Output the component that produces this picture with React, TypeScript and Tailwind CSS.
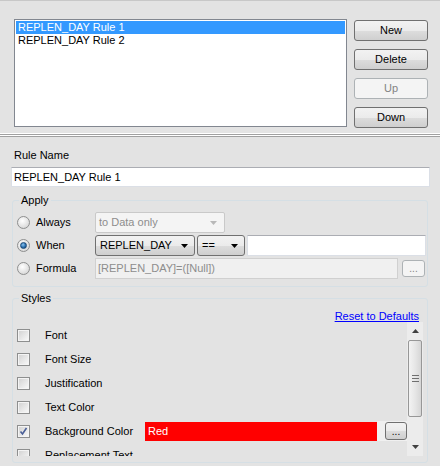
import type { ReactNode } from 'react';

const FONT = "font-['Liberation_Sans',Arial,sans-serif]";

function WinButton({ children, disabled, className }: { children: ReactNode; disabled?: boolean; className?: string }) {
  return (
    <div
      className={[
        'flex items-center justify-center rounded-[3px] border leading-[13px]',
        disabled
          ? 'border-[#adb2b5] bg-[#f4f4f4] text-[#838383]'
          : 'border-[#707070] bg-[linear-gradient(to_bottom,#f2f2f2_0%,#ebebeb_50%,#dddddd_51%,#cfcfcf_100%)] text-black',
        className ?? '',
      ].join(' ')}
    >
      {children}
    </div>
  );
}

function Arrow({ light }: { light?: boolean }) {
  return (
    <svg width="7" height="4" viewBox="0 0 7 4" className="shrink-0">
      <path d="M0 0h7L3.5 4z" fill={light ? '#b8b8b8' : '#000'} />
    </svg>
  );
}

function Radio({ checked }: { checked?: boolean }) {
  return (
    <div className="flex h-[13px] w-[13px] shrink-0 items-center justify-center rounded-full border border-[#8e8f8f] bg-[radial-gradient(circle_at_40%_35%,#ffffff,#dcdcdc_70%,#c8c8c8)]">
      {checked ? (
        <div className="h-[7px] w-[7px] rounded-full border border-[#1b4a78] bg-[radial-gradient(circle_at_40%_35%,#8cc4ee,#2a70b0_55%,#0f3d6b)]" />
      ) : null}
    </div>
  );
}

function Checkbox({ checked }: { checked?: boolean }) {
  return (
    <div className="flex h-[13px] w-[13px] shrink-0 items-center justify-center border border-[#8e8f8f] bg-[#f4f4f4]">
      <div className="flex h-[9px] w-[9px] items-center justify-center bg-[linear-gradient(135deg,#d4d4d4,#f7f7f7)]">
        {checked ? (
          <svg width="9" height="9" viewBox="0 0 9 9">
            <path d="M1.5 4.5l2 2.5L7.5 1" stroke="#4a5f97" strokeWidth="1.6" fill="none" />
          </svg>
        ) : null}
      </div>
    </div>
  );
}

function GroupBox({ title, children, className }: { title: string; children: ReactNode; className?: string }) {
  return (
    <div className={'relative mx-[12px] rounded-[3px] border border-[#d5dfe5] ' + (className ?? '')}>
      <span className="absolute -top-[7px] left-[6px] bg-[#e3e3e3] px-[2px] leading-[13px]">{title}</span>
      {children}
    </div>
  );
}

const styleRows = ['Font', 'Font Size', 'Justification', 'Text Color', 'Background Color', 'Replacement Text'];

export default function App() {
  return (
    <div className={`${FONT} h-[466px] w-[440px] overflow-hidden border-t border-[#c8c8c8] bg-[#e3e3e3] text-[11px] text-black`}>
      {/* rule list + buttons */}
      <div className="flex h-[132px] items-start pl-[14px] pt-[18px]">
        <div className="h-[108px] w-[333px] border border-[#828790] bg-white p-[1px] leading-[13px]">
          <div className="bg-[#3399ff] pl-[2px] text-white">REPLEN_DAY Rule 1</div>
          <div className="pl-[2px]">REPLEN_DAY Rule 2</div>
        </div>
        <div className="ml-[7px] mt-[1px] flex w-[74px] flex-col gap-[8px]">
          <WinButton className="h-[21px]">New</WinButton>
          <WinButton className="h-[21px]">Delete</WinButton>
          <WinButton className="h-[21px]" disabled>Up</WinButton>
          <WinButton className="h-[21px]">Down</WinButton>
        </div>
      </div>

      {/* splitter */}
      <div className="h-[4px] border-y border-t-white border-b-[#a0a0a0] bg-[linear-gradient(to_bottom,#a0a0a0_50%,#ffffff_50%)]" />

      <div className="pt-[12px]">
        <div className="pl-[14px] leading-[13px]">Rule Name</div>
        <div className="ml-[11px] mt-[5px] flex h-[20px] w-[419px] items-center border border-[#dbdfe6] border-t-[#abadb3] bg-white pl-[2px]">
          REPLEN_DAY Rule 1
        </div>

        <GroupBox title="Apply" className="mt-[13px] h-[87px] pt-[11px]">
          <div className="flex flex-col gap-[2px]">
            <div className="flex h-[21px] items-center">
              <div className="ml-[4px]"><Radio /></div>
              <span className="ml-[6px] w-[59px]">Always</span>
              <div className="flex h-[21px] w-[130px] items-center justify-between rounded-[2px] border border-[#c9c9c9] bg-[#f4f4f4] pl-[3px] pr-[7px] text-[#8d8d8d]">
                to Data only
                <Arrow light />
              </div>
            </div>
            <div className="flex h-[21px] items-center">
              <div className="ml-[4px]"><Radio checked /></div>
              <span className="ml-[6px] w-[59px]">When</span>
              <WinButton className="h-[21px] w-[100px] !justify-between pl-[4px] pr-[6px]">
                REPLEN_DAY
                <Arrow />
              </WinButton>
              <WinButton className="ml-[2px] h-[21px] w-[48px] !justify-between pl-[4px] pr-[6px]">
                ==
                <Arrow />
              </WinButton>
              <div className="ml-[2px] h-[21px] w-[179px] border border-[#dbdfe6] border-t-[#abadb3] bg-white" />
            </div>
            <div className="flex h-[21px] items-center">
              <div className="ml-[4px]"><Radio /></div>
              <span className="ml-[6px] w-[59px]">Formula</span>
              <div className="flex h-[21px] w-[303px] items-center border border-[#d0d0d0] bg-[#f0f0f0] pl-[2px] text-[#8d8d8d]">
                [REPLEN_DAY]=([Null])
              </div>
              <WinButton disabled className="ml-[4px] h-[17px] w-[23px] items-end pb-[1px] text-[10px]">...</WinButton>
            </div>
          </div>
        </GroupBox>

        <GroupBox title="Styles" className="mt-[11px] h-[165px] pt-[11px]">
          <div className="flex h-[12px] justify-end pr-[8px] leading-[12px]">
            <span className="text-[#0000ff] underline">Reset to Defaults</span>
          </div>
          <div className="flex h-[134px] pr-[4px]">
            <div className="flex-1 overflow-hidden">
              {styleRows.map((label) => (
                <div key={label} className="flex h-[24px] items-center pl-[4px] pt-[2px]">
                  <Checkbox checked={label === 'Background Color'} />
                  <span className="ml-[15px] w-[100px] whitespace-nowrap">{label}</span>
                  {label === 'Background Color' ? (
                    <>
                      <div className="flex h-[19px] w-[232px] items-center bg-[#ff0000] pl-[3px] text-white">Red</div>
                      <div className="flex h-[20px] flex-1 items-center bg-[#f0f0f0] pl-[8px]">
                        <WinButton className="h-[18px] w-[22px] items-end pb-[1px] text-[10px]">...</WinButton>
                      </div>
                    </>
                  ) : null}
                </div>
              ))}
            </div>
            {/* scrollbar */}
            <div className="flex w-[16px] flex-col items-center bg-[#ececec]">
              <div className="flex h-[18px] items-center">
                <svg width="7" height="4" viewBox="0 0 7 4">
                  <path d="M3.5 0L7 4H0z" fill="#404040" />
                </svg>
              </div>
              <div className="flex h-[77px] w-[14px] flex-col items-center justify-center gap-[2px] rounded-[2px] border border-[#979797] bg-[linear-gradient(to_right,#f3f3f3,#e6e6e6_50%,#d6d6d6)]">
                <div className="h-px w-[7px] bg-[#6f6f6f]" />
                <div className="h-px w-[7px] bg-[#6f6f6f]" />
                <div className="h-px w-[7px] bg-[#6f6f6f]" />
              </div>
              <div className="flex flex-1 items-end pb-[7px]">
                <svg width="7" height="4" viewBox="0 0 7 4">
                  <path d="M0 0h7L3.5 4z" fill="#404040" />
                </svg>
              </div>
            </div>
          </div>
        </GroupBox>
      </div>
    </div>
  );
}
